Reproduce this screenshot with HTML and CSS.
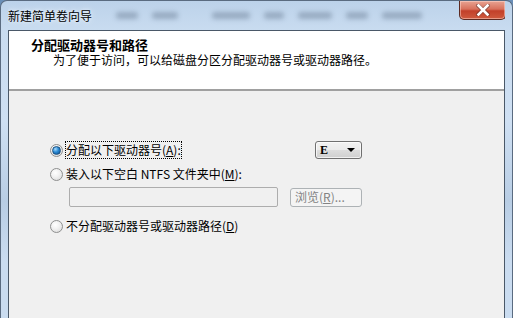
FILE: index.html
```html
<!DOCTYPE html>
<html lang="zh-CN">
<head>
<meta charset="utf-8">
<link rel="stylesheet" href="styles.css">
</head>
<body>
<div class="window">
  <div class="titlebar">
    <span class="title">新建简单卷向导</span>
    <div class="blurs">
      <i class="b1"></i><i class="b2"></i><i class="b3"></i><i class="b4"></i><i class="b5"></i><i class="b6"></i><i class="b7"></i>
    </div>
    <div class="close">
      <svg width="16" height="12" viewBox="0 0 16 12"><path d="M3 1.5 L13 10.5 M13 1.5 L3 10.5" stroke="#3a2020" stroke-width="4" stroke-linecap="round" opacity="0.45"/><path d="M3.5 1.5 L12.5 10.5 M12.5 1.5 L3.5 10.5" stroke="#ffffff" stroke-width="2.6" stroke-linecap="square"/></svg>
    </div>
  </div>
  <div class="client">
    <div class="header">
      <div class="h-title">分配驱动器号和路径</div>
      <div class="h-sub">为了便于访问，可以给磁盘分区分配驱动器号或驱动器路径。</div>
    </div>
    <div class="body">
      <div class="row">
        <span class="radio on"></span>
        <span class="label focus">分配以下驱动器号(<u>A</u>):</span>
        <div class="combo"><span>E</span><span class="arrow"></span></div>
      </div>
      <div class="row">
        <span class="radio"></span>
        <span class="label">装入以下空白 NTFS 文件夹中(<u>M</u>):</span>
      </div>
      <div class="inrow">
        <div class="input"></div>
        <div class="btn">浏览(<u>R</u>)...</div>
      </div>
      <div class="row r3">
        <span class="radio"></span>
        <span class="label">不分配驱动器号或驱动器路径(<u>D</u>)</span>
      </div>
    </div>
  </div>
</div>
</body>
</html>
```
FILE: styles.css
```css
html, body {
  margin: 0;
  padding: 0;
}
body {
  width: 513px;
  height: 318px;
  overflow: hidden;
  background: #6a8fb8;
  font-family: "Noto Sans CJK SC", "Noto Sans", sans-serif;
  font-size: 12px;
  color: #000;
}
.window {
  width: 513px;
  height: 330px;
  box-sizing: border-box;
  padding: 0 7px 0 7px;
  border-radius: 7px 7px 0 0;
  background: linear-gradient(180deg, #bcd2ea 0px, #c9dcf0 30px, #cfe0f3 120px, #b8cde4 200px, #cadcf0 260px);
  border: 1px solid #5a6b80;
  border-bottom: none;
  display: flex;
  flex-direction: column;
}
.titlebar {
  height: 29px;
  display: flex;
  align-items: flex-start;
  position: relative;
  overflow: hidden;
}
.title {
  padding-top: 6px;
  line-height: 18px;
  color: #000;
  text-shadow: 0 0 6px #e8f2fc, 0 0 3px #eef5fd;
  white-space: nowrap;
  position: relative;
  z-index: 1;
}
.blurs {
  display: flex;
  gap: 14px;
  margin-left: 24px;
  margin-top: 11px;
  filter: blur(2.5px);
  opacity: 0.5;
}
.blurs i {
  display: block;
  height: 7px;
  background: #6c7f96;
  border-radius: 3px;
}
.blurs .b1 { width: 22px; }
.blurs .b2 { width: 26px; }
.blurs .b3 { width: 38px; margin-left: 20px; }
.blurs .b4 { width: 20px; }
.blurs .b5 { width: 34px; }
.blurs .b6 { width: 22px; }
.blurs .b7 { width: 40px; }
.close {
  margin-left: auto;
  margin-right: -1px;
  width: 47px;
  height: 19px;
  box-sizing: border-box;
  border: 1px solid #5c2a22;
  border-top: none;
  border-radius: 0 0 5px 5px;
  background: linear-gradient(180deg, #e8a493 0%, #d8715c 45%, #c2402a 55%, #cf5a3e 100%);
  display: flex;
  align-items: center;
  justify-content: center;
  box-shadow: inset 0 0 0 1px rgba(255,220,210,0.5);
}
.client {
  flex: 1;
  background: #f0f0f0;
  border: 1px solid #4a5868;
  border-bottom: none;
  display: flex;
  flex-direction: column;
}
.header {
  height: 58px;
  background: #ffffff;
  border-bottom: 2px solid #a0a0a0;
  box-sizing: content-box;
  padding-left: 22px;
  font-family: "Liberation Sans", "Noto Sans CJK SC", sans-serif;
}
.h-title {
  font-weight: bold;
  font-size: 13px;
  line-height: 14px;
  margin-top: 8px;
}
.h-sub {
  margin-left: 22px;
  line-height: 14px;
  margin-top: 1px;
}
.body {
  padding-top: 47px;
  padding-left: 41px;
  width: 312px;
  box-sizing: content-box;
}
.row {
  height: 24px;
  display: flex;
  align-items: center;
}
.r3 {
  margin-top: 7px;
}
.radio {
  width: 11px;
  height: 11px;
  border-radius: 50%;
  border: 1px solid #8e8f8f;
  background: radial-gradient(circle at 40% 35%, #ffffff 0%, #f2f2f2 40%, #d6d6d6 100%);
  box-sizing: content-box;
  flex: none;
  display: flex;
  align-items: center;
  justify-content: center;
}
.radio.on::after {
  content: "";
  width: 7px;
  height: 7px;
  border-radius: 50%;
  background: radial-gradient(circle at 35% 30%, #a8dbff 0%, #2a8ad4 45%, #0d4a8c 100%);
  border: 0.5px solid #1c5180;
}
.label {
  margin-left: 3px;
  line-height: 16px;
  white-space: nowrap;
}
.label u {
  text-decoration: underline;
}
.focus {
  outline: 1px dotted #000;
  outline-offset: 0;
}
.combo {
  margin-left: auto;
  width: 47px;
  height: 18px;
  box-sizing: border-box;
  border: 1px solid #707070;
  border-radius: 3px;
  background: linear-gradient(180deg, #f2f2f2 0%, #ebebeb 50%, #dddddd 51%, #cfcfcf 100%);
  display: flex;
  align-items: center;
  padding-left: 4px;
  padding-right: 6px;
  font-family: "Liberation Serif", serif;
  font-size: 12px;
  font-weight: bold;
  box-shadow: inset 0 0 0 1px rgba(255,255,255,0.7);
}
.arrow {
  margin-left: auto;
  width: 0;
  height: 0;
  border-left: 4px solid transparent;
  border-right: 4px solid transparent;
  border-top: 4px solid #000;
}
.inrow {
  display: flex;
  align-items: flex-start;
  margin-top: 1px;
  padding-left: 19px;
}
.input {
  width: 209px;
  height: 20px;
  box-sizing: border-box;
  border: 1px solid #adadad;
  border-radius: 2px;
  background: #f0f0f0;
}
.btn {
  margin-left: 12px;
  margin-top: 1px;
  width: 72px;
  height: 19px;
  box-sizing: border-box;
  border: 1px solid #adb2b5;
  border-radius: 3px;
  background: #f4f4f4;
  color: #838383;
  line-height: 16px;
  padding-left: 4px;
  white-space: nowrap;
}
```
